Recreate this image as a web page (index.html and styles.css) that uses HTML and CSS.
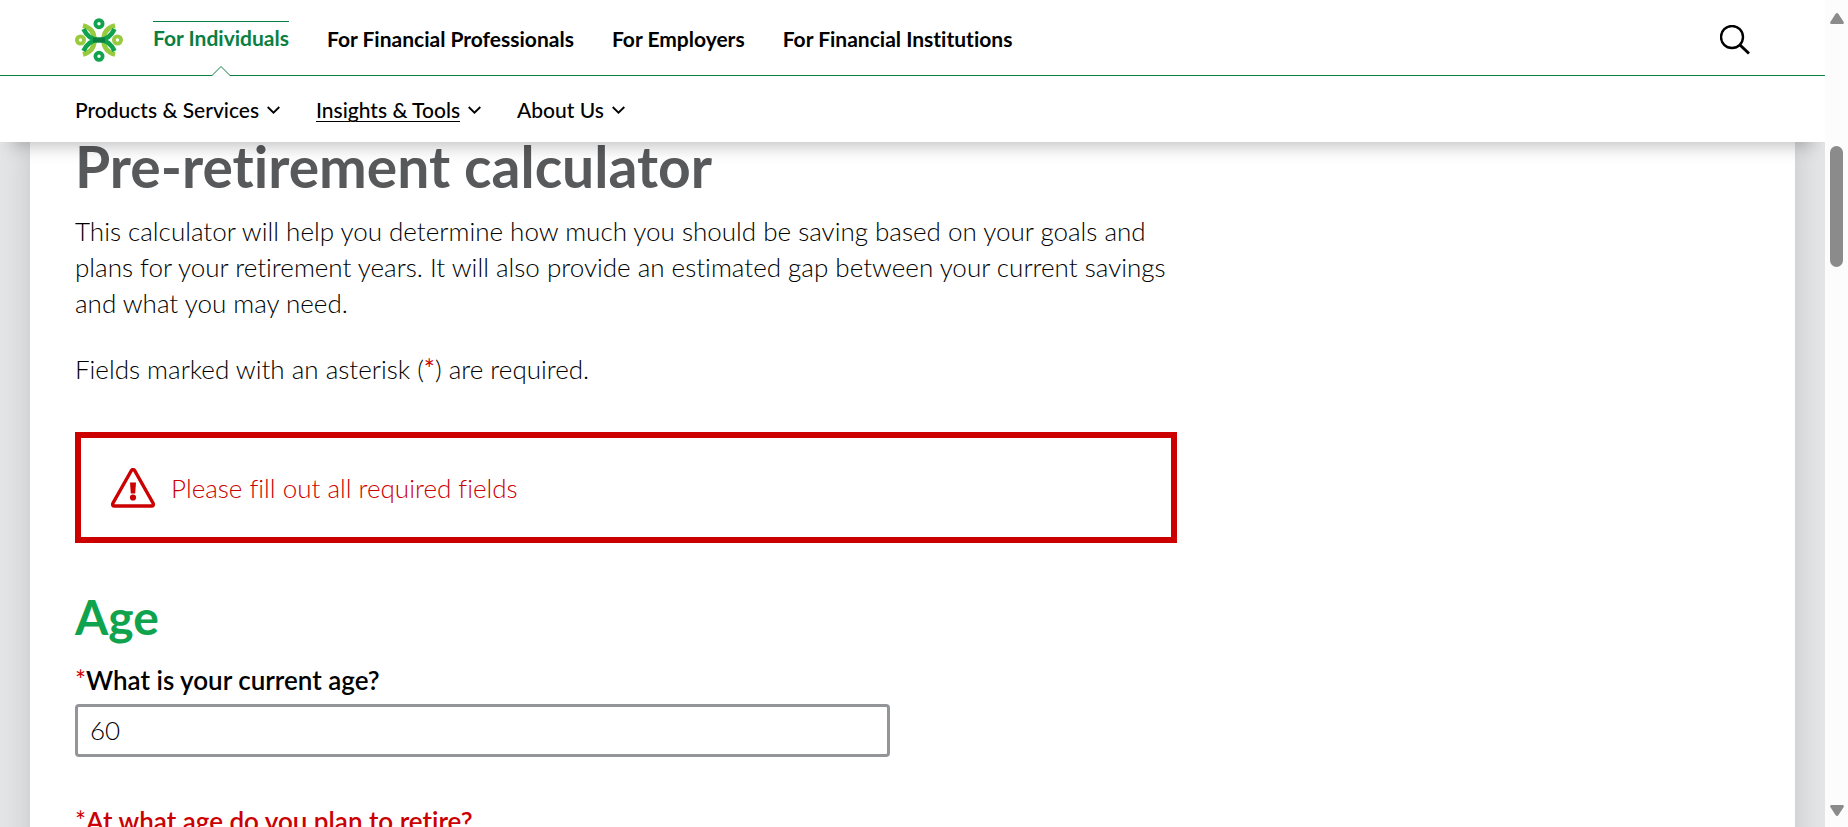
FILE: index.html
```
<!DOCTYPE html>
<html lang="en">
<head>
<meta charset="utf-8">
<meta name="viewport" content="width=device-width, initial-scale=1">
<title>Pre-retirement calculator</title>
<link rel="stylesheet" href="styles.css">
</head>
<body>
<div class="page">
  <header class="header">
    <div class="topbar">
      <a class="logo" href="#" aria-label="Home">
        <svg width="48" height="44" viewBox="0 0 48 44" fill="none">
          <g stroke="#97ca3d" stroke-width="4.600">
            <path d="M8 7.500C15 9.500 19.500 14 19.500 22S15 34.500 8 36.500"/>
            <path d="M40 7.500C33 9.500 28.500 14 28.500 22S33 34.500 40 36.500"/>
            <circle cx="5.500" cy="22" r="3.600" stroke-width="3.800"/>
            <circle cx="42.500" cy="22" r="3.600" stroke-width="3.800"/>
          </g>
          <g stroke="#0fa34d" stroke-width="4.600">
            <path d="M8.500 11C12 18.500 17 22 24 22S36 18.500 39.500 11"/>
            <path d="M8.500 33C12 25.500 17 22 24 22S36 25.500 39.500 33"/>
            <circle cx="24" cy="5.700" r="3.600" stroke-width="3.800"/>
            <circle cx="24" cy="38.300" r="3.600" stroke-width="3.800"/>
          </g>
          <path d="M18 19.500h12v5H18z" fill="#0b7f42"/>
        </svg>
      </a>
      <nav class="audiences" aria-label="Audience">
        <a class="audience audience-active" href="#" aria-current="page"><span class="audience-text">For Individuals</span>
          <svg class="pointer" width="20" height="11" viewBox="0 0 20 11" fill="#fff" stroke="#0b7f42"><path stroke="none" d="M1 11 10 1l9 10z"/><path d="M0 10.500h1L10 1.500l9 9h1"/></svg>
        </a>
        <a class="audience" href="#">For Financial Professionals</a>
        <a class="audience" href="#">For Employers</a>
        <a class="audience" href="#">For Financial Institutions</a>
      </nav>
      <button class="search" type="button" aria-label="Search">
        <svg width="30" height="30" viewBox="0 0 30 30" fill="none" stroke="#000"><circle cx="12" cy="12" r="11" stroke-width="2.400"/><path d="m20 20 9 8.500" stroke-width="3"/></svg>
      </button>
    </div>
    <nav class="sections" aria-label="Sections">
      <button class="section" type="button"><span>Products &amp; Services</span><svg width="13" height="8" viewBox="0 0 13 8" fill="none" stroke="#000" stroke-width="1.800"><path d="m.7 1 5.800 5.700L12.300 1"/></svg></button>
      <button class="section" type="button"><span class="current">Insights &amp; Tools</span><svg width="13" height="8" viewBox="0 0 13 8" fill="none" stroke="#000" stroke-width="1.800"><path d="m.7 1 5.800 5.700L12.300 1"/></svg></button>
      <button class="section" type="button"><span>About Us</span><svg width="13" height="8" viewBox="0 0 13 8" fill="none" stroke="#000" stroke-width="1.800"><path d="m.7 1 5.800 5.700L12.300 1"/></svg></button>
    </nav>
  </header>
  <main class="backdrop">
    <form class="sheet">
      <h1 class="title">Pre-retirement calculator</h1>
      <p class="copy">This calculator will help you determine how much you should be saving based on your goals and plans for your retirement years. It will also provide an estimated gap between your current savings and what you may need.</p>
      <p class="copy">Fields marked with an asterisk (<span class="star">*</span>) are required.</p>
      <div class="alert" role="alert">
        <svg width="44" height="40" viewBox="0 0 44 40" fill="none" stroke="#c00"><path d="M20.400 2.500 1.900 35.200Q.9 38 3.500 38h37q2.600 0 1.600-2.800L23.600 2.500q-1.600-2-3.200 0z" stroke-width="3.400"/><path d="M19 14.500h6l-.8 11h-4.400z" fill="#c00" stroke="none"/><circle cx="22" cy="29.500" r="3.100" fill="#c00" stroke="none"/></svg>
        <span>Please fill out all required fields</span>
      </div>
      <h2 class="group">Age</h2>
      <div class="field">
        <label class="label" for="age"><span class="star">*</span>What is your current age?</label>
        <input class="input" id="age" type="text" value="60">
      </div>
      <div class="field">
        <label class="label label-error" for="retire"><span class="star">*</span>At what age do you plan to retire?</label>
        <input class="input" id="retire" type="text">
      </div>
    </form>
  </main>
</div>
<div class="scrollbar" aria-hidden="true">
  <svg width="14" height="11" viewBox="0 0 14 11" fill="#8b8b8b"><path d="M5.500 1q1.500-2 3 0l5.200 8q.6 2-1.200 2h-11q-1.800 0-1.200-2z"/></svg>
  <div class="track"><div class="thumb"></div></div>
  <svg width="14" height="11" viewBox="0 0 14 11" fill="#8b8b8b"><path d="M5.500 10q1.500 2 3 0l5.200-8q.6-2-1.200-2h-11Q-.3 0 .3 2z"/></svg>
</div>
</body>
</html>
```
FILE: styles.css
```
* { box-sizing: border-box; }

body {
  margin: 0;
  height: 100vh;
  display: flex;
  overflow: hidden;
  background: #fff;
  color: #000;
  font-family: Lato, "Liberation Sans", sans-serif;
  font-variant-ligatures: none;
}

.page {
  flex: 1;
  min-width: 0;
  display: flex;
  flex-direction: column;
  overflow: hidden;
}

.header {
  position: relative;
  z-index: 1;
  flex: none;
  background: #fff;
  box-shadow: 0 16px 16px -12px rgba(0, 0, 0, 0.25);
}

.topbar {
  display: flex;
  align-items: stretch;
  height: 76px;
  padding: 0 75px;
  border-bottom: 1px solid #0b7f42;
}

.logo {
  display: flex;
  align-items: center;
  padding-top: 4px;
  margin-right: 30px;
}

.audiences {
  display: flex;
  gap: 38px;
}

.audience {
  position: relative;
  display: flex;
  align-items: center;
  padding-top: 3px;
  color: #000;
  font-size: 21px;
  font-weight: 700;
  line-height: 34px;
  text-decoration: none;
}

.audience-active {
  padding-top: 0;
  color: #0b7f42;
}

.audience-text {
  border-top: 1px solid #0b7f42;
  line-height: 32px;
}

.pointer {
  position: absolute;
  bottom: -1px;
  left: calc(50% - 10px);
}

.search {
  margin-left: auto;
  padding: 8px 0 0;
  border: 0;
  background: none;
}

.sections {
  display: flex;
  gap: 36px;
  height: 66px;
  padding: 0 75px;
}

.section {
  display: flex;
  align-items: center;
  gap: 8px;
  padding: 2px 0 0;
  border: 0;
  background: none;
  color: #000;
  font: 500 21px/28px Lato, "Liberation Sans", sans-serif;
}

.current {
  text-decoration: underline;
  text-decoration-thickness: 1px;
  text-underline-offset: 3px;
}

.backdrop {
  flex: 1;
  min-height: 0;
  padding: 0 30px;
  background: #e4e5e7;
}

.sheet {
  min-height: 100%;
  padding: 0 45px;
  background: #fff;
  box-shadow: 0 0 30px rgba(0, 0, 0, 0.15);
}

.title {
  margin: 0;
  color: #58595b;
  font-size: 57px;
  font-weight: 700;
  line-height: 49px;
}

.copy {
  max-width: 1102px;
  margin: 0;
  padding-top: 22px;
  font-size: 26px;
  font-weight: 300;
  line-height: 36px;
}

.copy + .copy { padding-top: 30px; }

.star {
  color: #c00;
  font-weight: 400;
}

.alert {
  display: flex;
  align-items: center;
  gap: 16px;
  max-width: 1102px;
  height: 111px;
  margin-top: 45px;
  padding: 0 30px;
  border: 6px solid #c00;
  color: #c00;
  font-size: 26px;
  font-weight: 300;
  line-height: 36px;
}

.group {
  margin: 46px 0 0;
  color: #0fa34d;
  font-size: 48px;
  font-weight: 700;
  line-height: 56px;
}

.field {
  max-width: 815px;
  margin-bottom: 31px;
  padding-top: 15px;
}

.group + .field { padding-top: 17px; }

.label {
  display: block;
  margin-bottom: 6px;
  font-size: 26px;
  font-weight: 600;
  line-height: 36px;
}

.label-error { color: #c00; }

.input {
  display: block;
  width: 100%;
  height: 53px;
  padding: 0 12px 2px;
  border: 3px solid #939598;
  border-radius: 4px;
  background: #fff;
  color: #000;
  font: 300 26px/36px Lato, "Liberation Sans", sans-serif;
}

.scrollbar {
  display: flex;
  flex: none;
  flex-direction: column;
  align-items: center;
  width: 23px;
  padding: 13px 0 11px;
  background: #fcfcfc;
}

.track { flex: 1; }

.thumb {
  width: 13px;
  height: 121px;
  margin-top: 122px;
  border-radius: 7px;
  background: #8b8b8b;
}
```
